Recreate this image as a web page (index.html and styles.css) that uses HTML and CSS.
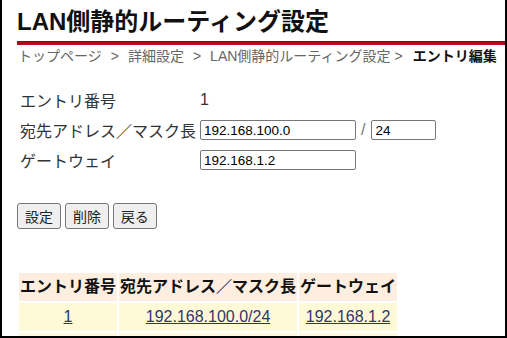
FILE: index.html
```html
<!DOCTYPE html>
<html lang="ja">
<head>
<meta charset="UTF-8" />
<meta name="viewport" content="width=device-width, initial-scale=1" />
<title>LAN側静的ルーティング設定</title>
<link rel="stylesheet" href="styles.css">
</head>
<body>

<div class="frame">
  <h1 class="title">LAN側静的ルーティング設定</h1>
  <div class="rule"></div>

  <p class="crumbs">
    <a href="#">トップページ</a><span class="sep">&gt;</span><a href="#">詳細設定</a><span class="sep">&gt;</span><a href="#">LAN側静的ルーティング設定</a><span class="sep last">&gt;</span><strong>エントリ編集</strong>
  </p>

  <table class="form">
    <tr>
      <td class="label">エントリ番号</td>
      <td>1</td>
    </tr>
    <tr>
      <td class="label">宛先アドレス／マスク長</td>
      <td><input type="text" class="addr" value="192.168.100.0"><span class="slash">/</span><input type="text" class="mask" value="24"></td>
    </tr>
    <tr>
      <td class="label">ゲートウェイ</td>
      <td><input type="text" class="addr" value="192.168.1.2"></td>
    </tr>
  </table>

  <div class="buttons">
    <button>設定</button>
    <button>削除</button>
    <button>戻る</button>
  </div>

  <table class="list">
    <thead>
      <tr>
        <th>エントリ番号</th>
        <th>宛先アドレス／マスク長</th>
        <th>ゲートウェイ</th>
      </tr>
    </thead>
    <tbody>
      <tr>
        <td><a href="#">1</a></td>
        <td><a href="#">192.168.100.0/24</a></td>
        <td><a href="#">192.168.1.2</a></td>
      </tr>
      <tr>
        <td>&nbsp;</td>
        <td>&nbsp;</td>
        <td>&nbsp;</td>
      </tr>
    </tbody>
  </table>
</div>

</body>
</html>
```

FILE: styles.css
```css
body {
  margin: 0;
  font-family: 'Liberation Sans', 'Noto Sans CJK JP', sans-serif;
  color: #333;
  background: #fff;
}
.frame {
  width: 507px;
  height: 338px;
  box-sizing: border-box;
  border: 2px solid #000;
  border-top: none;
  overflow: hidden;
}
.title {
  margin: 0;
  padding: 7px 0 0 15px;
  font-size: 24px;
  line-height: 30px;
  font-weight: 700;
  color: #111;
}
.rule {
  margin: 4px 0 0 15px;
  height: 4px;
  background: linear-gradient(#8e0a14, #c4101f);
}
.crumbs {
  margin: 1px 0 0;
  padding-left: 16px;
  font-size: 14px;
  line-height: 20px;
  color: #666;
  white-space: nowrap;
}
.crumbs a {
  color: #666;
  text-decoration: none;
}
.crumbs .sep {
  margin: 0 9px;
}
.crumbs .sep.last {
  margin: 0 10px 0 4px;
}
.crumbs strong {
  color: #111;
}
.form {
  margin: 19px 0 0 18px;
  border-collapse: collapse;
  font-size: 16px;
}
.form td {
  height: 30px;
  padding: 0;
  white-space: nowrap;
}
.form .label {
  width: 180px;
}
input {
  height: 20px;
  box-sizing: border-box;
  border: 1px solid #767676;
  border-radius: 2px;
  padding: 0 3px;
  font-family: 'Liberation Sans', sans-serif;
  font-size: 13.5px;
  vertical-align: middle;
}
input.addr {
  width: 156px;
}
input.mask {
  width: 65px;
}
.slash {
  margin: 0 6px 0 5px;
  color: #777;
  vertical-align: middle;
}
.buttons {
  margin-top: 28px;
  padding-left: 15px;
  font-size: 14px;
}
button {
  height: 26px;
  padding: 0 7px;
  font-family: 'Liberation Sans', 'Noto Sans CJK JP', sans-serif;
  font-size: 14px;
  color: #222;
  background: #efefef;
  border: 1px solid #767676;
  border-radius: 3px;
}
.list {
  margin: 42px 0 0 15px;
  border-spacing: 2px;
  font-size: 16px;
}
.list th,
.list td {
  padding: 3px 1px;
  line-height: 22px;
  text-align: center;
  white-space: nowrap;
}
.list th {
  background: #fdeedf;
  color: #111;
  font-weight: 700;
}
.list td {
  background: #fef9d6;
}
.list a {
  color: #33336e;
}
```
